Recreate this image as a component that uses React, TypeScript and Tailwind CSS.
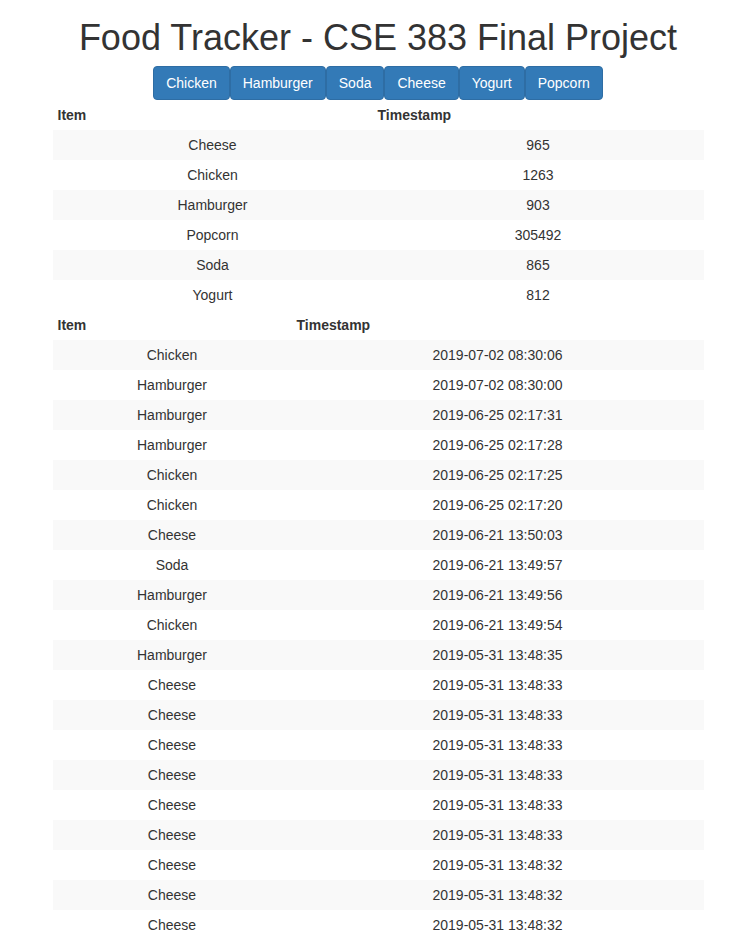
import React from 'react';

const foods = ['Chicken', 'Hamburger', 'Soda', 'Cheese', 'Yogurt', 'Popcorn'];

const totals: [string, string][] = [
    ['Cheese', '965'],
    ['Chicken', '1263'],
    ['Hamburger', '903'],
    ['Popcorn', '305492'],
    ['Soda', '865'],
    ['Yogurt', '812'],
];

const log: [string, string][] = [
    ['Chicken', '2019-07-02 08:30:06'],
    ['Hamburger', '2019-07-02 08:30:00'],
    ['Hamburger', '2019-06-25 02:17:31'],
    ['Hamburger', '2019-06-25 02:17:28'],
    ['Chicken', '2019-06-25 02:17:25'],
    ['Chicken', '2019-06-25 02:17:20'],
    ['Cheese', '2019-06-21 13:50:03'],
    ['Soda', '2019-06-21 13:49:57'],
    ['Hamburger', '2019-06-21 13:49:56'],
    ['Chicken', '2019-06-21 13:49:54'],
    ['Hamburger', '2019-05-31 13:48:35'],
    ['Cheese', '2019-05-31 13:48:33'],
    ['Cheese', '2019-05-31 13:48:33'],
    ['Cheese', '2019-05-31 13:48:33'],
    ['Cheese', '2019-05-31 13:48:33'],
    ['Cheese', '2019-05-31 13:48:33'],
    ['Cheese', '2019-05-31 13:48:33'],
    ['Cheese', '2019-05-31 13:48:32'],
    ['Cheese', '2019-05-31 13:48:32'],
    ['Cheese', '2019-05-31 13:48:32'],
    ['Cheese', '2019-05-31 13:48:32'],
    ['Cheese', '2019-05-31 13:48:31'],
];

const DataTable: React.FC<{ rows: [string, string][]; itemWidth: string }> = ({ rows, itemWidth }) => (
    <table className="w-[651px] mx-auto border-collapse table-fixed">
        <colgroup>
            <col className={itemWidth} />
            <col />
        </colgroup>
        <thead>
            <tr>
                <th className="text-left font-bold px-[5px] py-[5px] leading-5">Item</th>
                <th className="text-left font-bold px-[5px] py-[5px] leading-5">Timestamp</th>
            </tr>
        </thead>
        <tbody>
            {rows.map(([item, ts], i) => (
                <tr key={i} className={i % 2 === 0 ? 'bg-[#f9f9f9]' : ''}>
                    <td className="text-center px-[5px] py-[5px] leading-5">{item}</td>
                    <td className="text-center px-[5px] py-[5px] leading-5">{ts}</td>
                </tr>
            ))}
        </tbody>
    </table>
);

export default function App() {
    return (
        <div className="bg-white text-[#333] text-[14px] font-['Liberation_Sans',Arial,sans-serif]">
            <h1 className="text-center text-[36px] leading-[1.1] pt-[18px] pb-[8px]">
                Food Tracker - CSE 383 Final Project
            </h1>

            {/* Buttons */}
            <div className="flex justify-center">
                {foods.map(f => (
                    <button
                        key={f}
                        className="bg-[#337ab7] border border-[#2e6da4] text-white rounded px-3 py-1.5 leading-5 text-[14px]"
                    >
                        {f}
                    </button>
                ))}
            </div>

            <DataTable rows={totals} itemWidth="w-[320px]" />
            <DataTable rows={log} itemWidth="w-[239px]" />
        </div>
    );
}
